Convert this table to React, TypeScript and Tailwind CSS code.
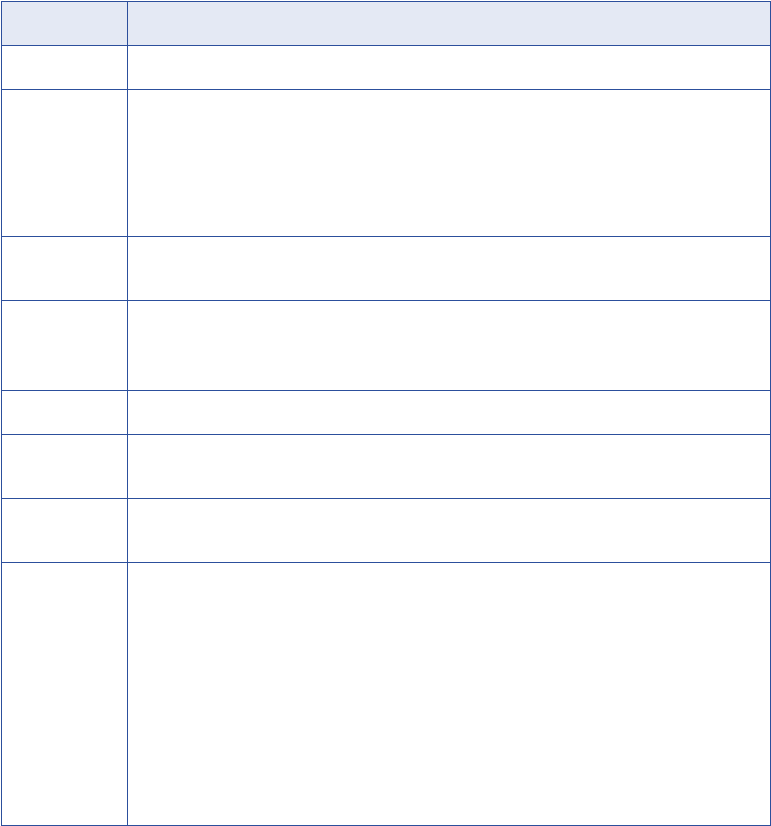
import React from 'react'

const rows = [44, 147, 64, 90, 44, 64, 64, 263]

export default function App() {
  return (
    <div className="bg-white w-[771px] h-[826px] pt-[1px] pl-[1px]">
      <div className="w-[770px] border-l border-t border-[#2c4f9c] grid grid-cols-[126px_643px]">
        <div className="h-[44px] bg-[#e4e9f4] border-r border-b border-[#2c4f9c]" />
        <div className="h-[44px] bg-[#e4e9f4] border-r border-b border-[#2c4f9c]" />
        {rows.map((h, i) => (
          <React.Fragment key={i}>
            <div className="border-r border-b border-[#2c4f9c]" style={{ height: h }} />
            <div className="border-r border-b border-[#2c4f9c]" style={{ height: h }} />
          </React.Fragment>
        ))}
      </div>
    </div>
  )
}
